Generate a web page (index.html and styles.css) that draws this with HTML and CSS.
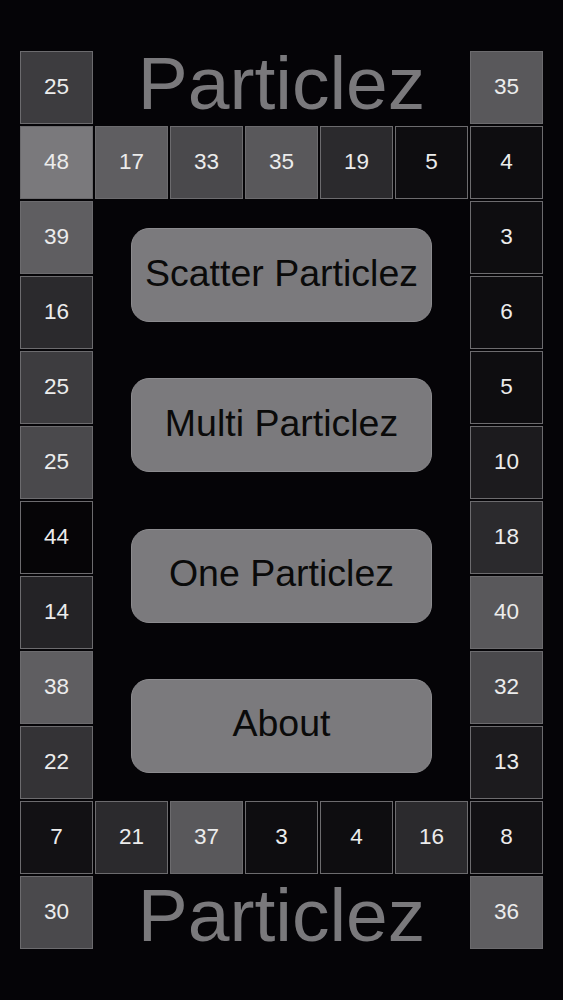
FILE: index.html
```html
<!DOCTYPE html>
<html>
<head>
<meta charset="utf-8">
<link rel="stylesheet" href="styles.css">
</head>
<body>
<div class="board">
  <div class="cell g7">25</div>
  <div class="title title-top">Particlez</div>
  <div class="cell g9">35</div>

  <div class="cell g11">48</div>
  <div class="cell g10">17</div>
  <div class="cell g8">33</div>
  <div class="cell g9">35</div>
  <div class="cell g5">19</div>
  <div class="cell g1">5</div>
  <div class="cell g1">4</div>

  <div class="cell g10">39</div>
  <div class="menu">
    <button class="btn">Scatter Particlez</button>
    <button class="btn">Multi Particlez</button>
    <button class="btn">One Particlez</button>
    <button class="btn">About</button>
  </div>
  <div class="cell g1">3</div>

  <div class="cell g5">16</div>
  <div class="cell g1">6</div>
  <div class="cell g7">25</div>
  <div class="cell g1">5</div>
  <div class="cell g8">25</div>
  <div class="cell g3">10</div>
  <div class="cell g0">44</div>
  <div class="cell g5">18</div>
  <div class="cell g4">14</div>
  <div class="cell g9">40</div>
  <div class="cell g10">38</div>
  <div class="cell g8">32</div>
  <div class="cell g6">22</div>
  <div class="cell g3">13</div>

  <div class="cell g2">7</div>
  <div class="cell g5">21</div>
  <div class="cell g9">37</div>
  <div class="cell g1">3</div>
  <div class="cell g1">4</div>
  <div class="cell g5">16</div>
  <div class="cell g2">8</div>

  <div class="cell g8">30</div>
  <div class="title title-bottom">Particlez</div>
  <div class="cell g10">36</div>
</div>
</body>
</html>
```
FILE: styles.css
```css
html, body {
  margin: 0;
  padding: 0;
  background: #050407;
}
body {
  width: 563px;
  height: 1000px;
  font-family: "Liberation Sans", Arial, sans-serif;
}
.board {
  display: grid;
  grid-template-columns: repeat(7, 73px);
  grid-template-rows: repeat(12, 73px);
  gap: 2px;
  padding: 51px 0 0 20px;
}
.cell {
  box-sizing: border-box;
  border: 1px solid #6c6b6e;
  color: #ececec;
  font-size: 22.5px;
  padding-bottom: 2px;
  display: flex;
  align-items: center;
  justify-content: center;
}
.g0 { background: #060507; }
.g1 { background: #0e0d10; }
.g2 { background: #121114; }
.g3 { background: #1c1b1e; }
.g4 { background: #242326; }
.g5 { background: #2b2a2d; }
.g6 { background: #343336; }
.g7 { background: #3d3c3f; }
.g8 { background: #4a494c; }
.g9 { background: #59585b; }
.g10 { background: #5f5e61; }
.g11 { background: #7a797c; }

.title {
  grid-column: span 5;
  color: #7a797c;
  font-size: 75px;
  line-height: 73px;
  text-align: center;
  white-space: nowrap;
}
.title-top { margin-top: -4px; }
.title-bottom { margin-top: 3px; }

.menu {
  grid-column: span 5;
  grid-row: span 8;
  display: flex;
  flex-direction: column;
  align-items: center;
  justify-content: space-between;
  padding: 27px 0 26px 0;
}
.btn {
  box-sizing: border-box;
  width: 301px;
  height: 94px;
  border: 1px solid #8c8b8e;
  border-radius: 18px;
  background: #7b7a7d;
  color: #0a0a0a;
  font-family: "Liberation Sans", Arial, sans-serif;
  font-size: 37.5px;
  padding: 0 0 4px 0;
}
```
